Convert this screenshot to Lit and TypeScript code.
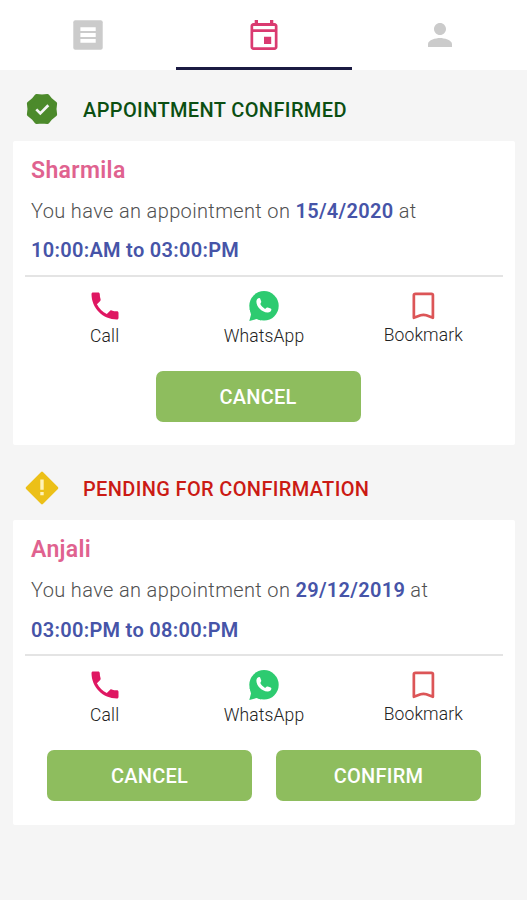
import { LitElement, html, css } from "lit";
import { customElement, property } from "lit/decorators.js";

interface Appointment {
  status: "confirmed" | "pending";
  title: string;
  name: string;
  date: string;
  time: string;
  buttons: string[];
}

const appointments: Appointment[] = [
  {
    status: "confirmed",
    title: "APPOINTMENT CONFIRMED",
    name: "Sharmila",
    date: "15/4/2020",
    time: "10:00:AM to 03:00:PM",
    buttons: ["CANCEL"],
  },
  {
    status: "pending",
    title: "PENDING FOR CONFIRMATION",
    name: "Anjali",
    date: "29/12/2019",
    time: "03:00:PM to 08:00:PM",
    buttons: ["CANCEL", "CONFIRM"],
  },
];

const phonePath =
  "M6.62 10.79c1.44 2.83 3.76 5.14 6.59 6.59l2.2-2.2c.27-.27.67-.36 1.02-.24 1.12.37 2.33.57 3.57.57.55 0 1 .45 1 1V20c0 .55-.45 1-1 1-9.39 0-17-7.61-17-17 0-.55.45-1 1-1h3.5c.55 0 1 .45 1 1 0 1.25.2 2.45.57 3.57.11.35.03.74-.25 1.02l-2.2 2.2z";

// Eight-cornered seal: a point every 45 degrees with a shallow notch between neighbours.
const sealPath =
  Array.from({ length: 16 }, (_, i) => {
    const a = (i * Math.PI) / 8;
    const r = i % 2 ? 14.2 : 12.5;
    return `${i ? "L" : "M"}${(16 + r * Math.cos(a)).toFixed(2)} ${(16 + r * Math.sin(a)).toFixed(2)}`;
  }).join("") + "Z";

@customElement("tab-bar")
class TabBar extends LitElement {
  static styles = css`
    :host {
      display: grid;
      grid-template-columns: repeat(3, 176px);
      height: 70px;
      background: #fff;
      overflow: hidden;
    }
    .tab {
      display: flex;
      align-items: center;
      justify-content: center;
      box-sizing: border-box;
      height: 70px;
      border-bottom: 3px solid transparent;
      padding-top: 3px;
      color: #cbcbcb;
    }
    .active {
      color: #da3a70;
      border-bottom-color: #1b1b42;
    }
    svg {
      display: block;
      width: 36px;
      height: 36px;
      fill: currentColor;
    }
  `;
  render() {
    return html`
      <div class="tab">
        <svg viewBox="0 0 36 36">
          <rect x="3.3" y="3.3" width="29.4" height="29.4" rx="2"></rect>
          <path fill="#fff" d="M10.4 10.2h15.3v3.9H10.4zM10.4 16h15.3v4H10.4zM10.4 21.9h15.3v3.9H10.4z"></path>
        </svg>
      </div>
      <div class="tab active">
        <svg viewBox="0 0 24 24">
          <path
            fill-rule="evenodd"
            d="M19 4h-.8V2h-2.200v2H8V2H5.800v2H5c-1.110 0-2 .9-2 2v14c0 1.100.89 2 2 2h14c1.100 0 2-.9 2-2V6c0-1.100-.9-2-2-2zM19.200 20.200H4.800V10h14.400zM19.200 8.200H4.800V6h14.400zM12 13.200h4.800v4.800H12z"
          ></path>
        </svg>
      </div>
      <div class="tab">
        <svg viewBox="0 0 24 24">
          <path
            d="M12 12c2.21 0 4-1.79 4-4s-1.79-4-4-4-4 1.79-4 4 1.79 4 4 4zm0 2c-2.67 0-8 1.34-8 4v2h16v-2c0-2.66-5.33-4-8-4z"
          ></path>
        </svg>
      </div>
    `;
  }
}

@customElement("appointment-section")
class AppointmentSection extends LitElement {
  @property({ attribute: false }) data!: Appointment;

  static styles = css`
    :host {
      display: block;
    }
    .header {
      display: flex;
      align-items: center;
      height: 36px;
      padding: 21px 25px 14px;
    }
    .header svg {
      display: block;
      flex: none;
      width: 34px;
      height: 34px;
      margin-right: 24px;
    }
    .title {
      font-size: 20px;
      line-height: 36px;
      font-weight: 500;
      white-space: nowrap;
      padding-top: 1px;
    }
    .title.confirmed {
      color: #0b4f12;
      letter-spacing: 0.38px;
    }
    .title.pending {
      color: #cb1a14;
      letter-spacing: 0.35px;
    }
    .card {
      box-sizing: border-box;
      height: 304px;
      margin: 0 12px 0 13px;
      padding: 12px 12px 0;
      background: #fff;
      border-radius: 2px;
    }
    .pending-card {
      height: 305px;
    }
    .details {
      height: 122px;
      padding-left: 6px;
      border-bottom: 2px solid #e4e4e4;
      white-space: nowrap;
    }
    .name {
      font-size: 23px;
      line-height: 35px;
      font-weight: 600;
      letter-spacing: 0.35px;
      color: #e0628f;
    }
    .line {
      font-size: 20px;
      line-height: 39px;
      font-weight: 300;
      color: #505050;
      letter-spacing: 0.36px;
      margin-top: 4px;
    }
    .line + .line {
      margin-top: 0;
    }
    .pending-card .line + .line {
      margin-top: 1px;
    }
    .strong {
      font-weight: 600;
      letter-spacing: 0.3px;
      color: #4654a8;
    }
    .actions {
      display: grid;
      grid-template-columns: repeat(3, 1fr);
      height: 94px;
    }
    .action {
      display: flex;
      flex-direction: column;
      align-items: center;
      padding-top: 11px;
      font-size: 17.5px;
      line-height: 24px;
      letter-spacing: 0.12px;
      color: #222;
      font-weight: 300;
    }
    .action svg {
      display: block;
      width: 36px;
      height: 36px;
    }
    .label {
      margin-top: 0;
    }
    .action.bookmark .label {
      margin-top: -1px;
    }
    .buttons {
      display: flex;
      justify-content: center;
      gap: 24px;
    }
    .buttons.single {
      padding-right: 12px;
    }
    .button {
      width: 205px;
      height: 51px;
      border: 0;
      padding: 1px 0 0;
      border-radius: 7px;
      background: #8ebd5e;
      color: #fff;
      font: 500 20px/50px Roboto, sans-serif;
      letter-spacing: 0.25px;
    }
  `;

  private statusIcon() {
    return this.data.status === "confirmed"
      ? html`<svg viewBox="-1 -1 34 34">
          <path d=${sealPath} fill="#4c8a2b" stroke="#4c8a2b" stroke-width="4" stroke-linejoin="round"></path>
          <path d="M10.3 16.4l4 4 8-8.2" fill="none" stroke="#f5f5f5" stroke-width="2.700"></path>
        </svg>`
      : html`<svg viewBox="0 0 34 34">
          <path d="M17 2 32 17 17 32 2 17Z" fill="#ecc018" stroke="#ecc018" stroke-width="2.6" stroke-linejoin="round"></path>
          <path d="M15.3 8.6h3.4v10.2h-3.4zM15.3 21h3.4v3.3h-3.4z" fill="#fff3b8"></path>
        </svg>`;
  }

  render() {
    const d = this.data;
    return html`
      <div class="header">
        ${this.statusIcon()}
        <div class="title ${d.status}">${d.title}</div>
      </div>
      <div class="card ${d.status}-card">
        <div class="details">
          <div class="name">${d.name}</div>
          <div class="line">You have an appointment on <span class="strong">${d.date}</span> at</div>
          <div class="line"><span class="strong">${d.time}</span></div>
        </div>
        <div class="actions">
          <div class="action">
            <svg viewBox="0 0 24 24"><path fill="#df1762" d=${phonePath}></path></svg>
            <div class="label">Call</div>
          </div>
          <div class="action">
            <svg viewBox="0 0 36 36">
              <circle cx="18" cy="17.8" r="14.7" fill="#2dcb70"></circle>
              <path fill="#2dcb70" d="M3.6 21 5 26.500 3.300 32.900 10.500 31.100 15 32.400 14 20Z"></path>
              <path
                transform="translate(8 7.500) scale(.82)"
                fill="#fff"
                d="M7.700 10.500c1.200 2.300 3.300 4.500 5.800 5.900l1.800-1.500c.5-.4 1-.4 1.500-.2l3.500 1.300c.7.300 1 .7.900 1.300-.4 2.200-2.300 3.600-4.700 3.400C9 20 3 13.500 2.900 7.500c0-2.200 1.200-4 3.200-4.500.7-.2 1.200.1 1.400.8l1.300 3.400c.2.500.1 1-.2 1.400Z"
              ></path>
            </svg>
            <div class="label">WhatsApp</div>
          </div>
          <div class="action bookmark">
            <svg viewBox="0 0 24 24">
              <path
                fill="none"
                stroke="#dc5557"
                stroke-width="1.800"
                stroke-linejoin="round"
                d="M7 3.900h10.600q1 0 1 1v15l-4.400-1.700q-1.900-.7-3.800 0L5.900 19.900V4.900q0-1 1.100-1z"
              ></path>
            </svg>
            <div class="label">Bookmark</div>
          </div>
        </div>
        <div class="buttons ${d.buttons.length === 1 ? "single" : ""}">
          ${d.buttons.map((b) => html`<button class="button">${b}</button>`)}
        </div>
      </div>
    `;
  }
}

@customElement("app-root")
class AppRoot extends LitElement {
  static styles = css`
    :host {
      display: block;
      box-sizing: border-box;
      width: 527px;
      height: 900px;
      overflow: hidden;
      background: #f5f5f5;
      font-family: Roboto, sans-serif;
    }
    .list {
      display: flex;
      flex-direction: column;
      gap: 4px;
    }
  `;
  render() {
    return html`
      <tab-bar></tab-bar>
      <div class="list">
        ${appointments.map((a) => html`<appointment-section .data=${a}></appointment-section>`)}
      </div>
    `;
  }
}
